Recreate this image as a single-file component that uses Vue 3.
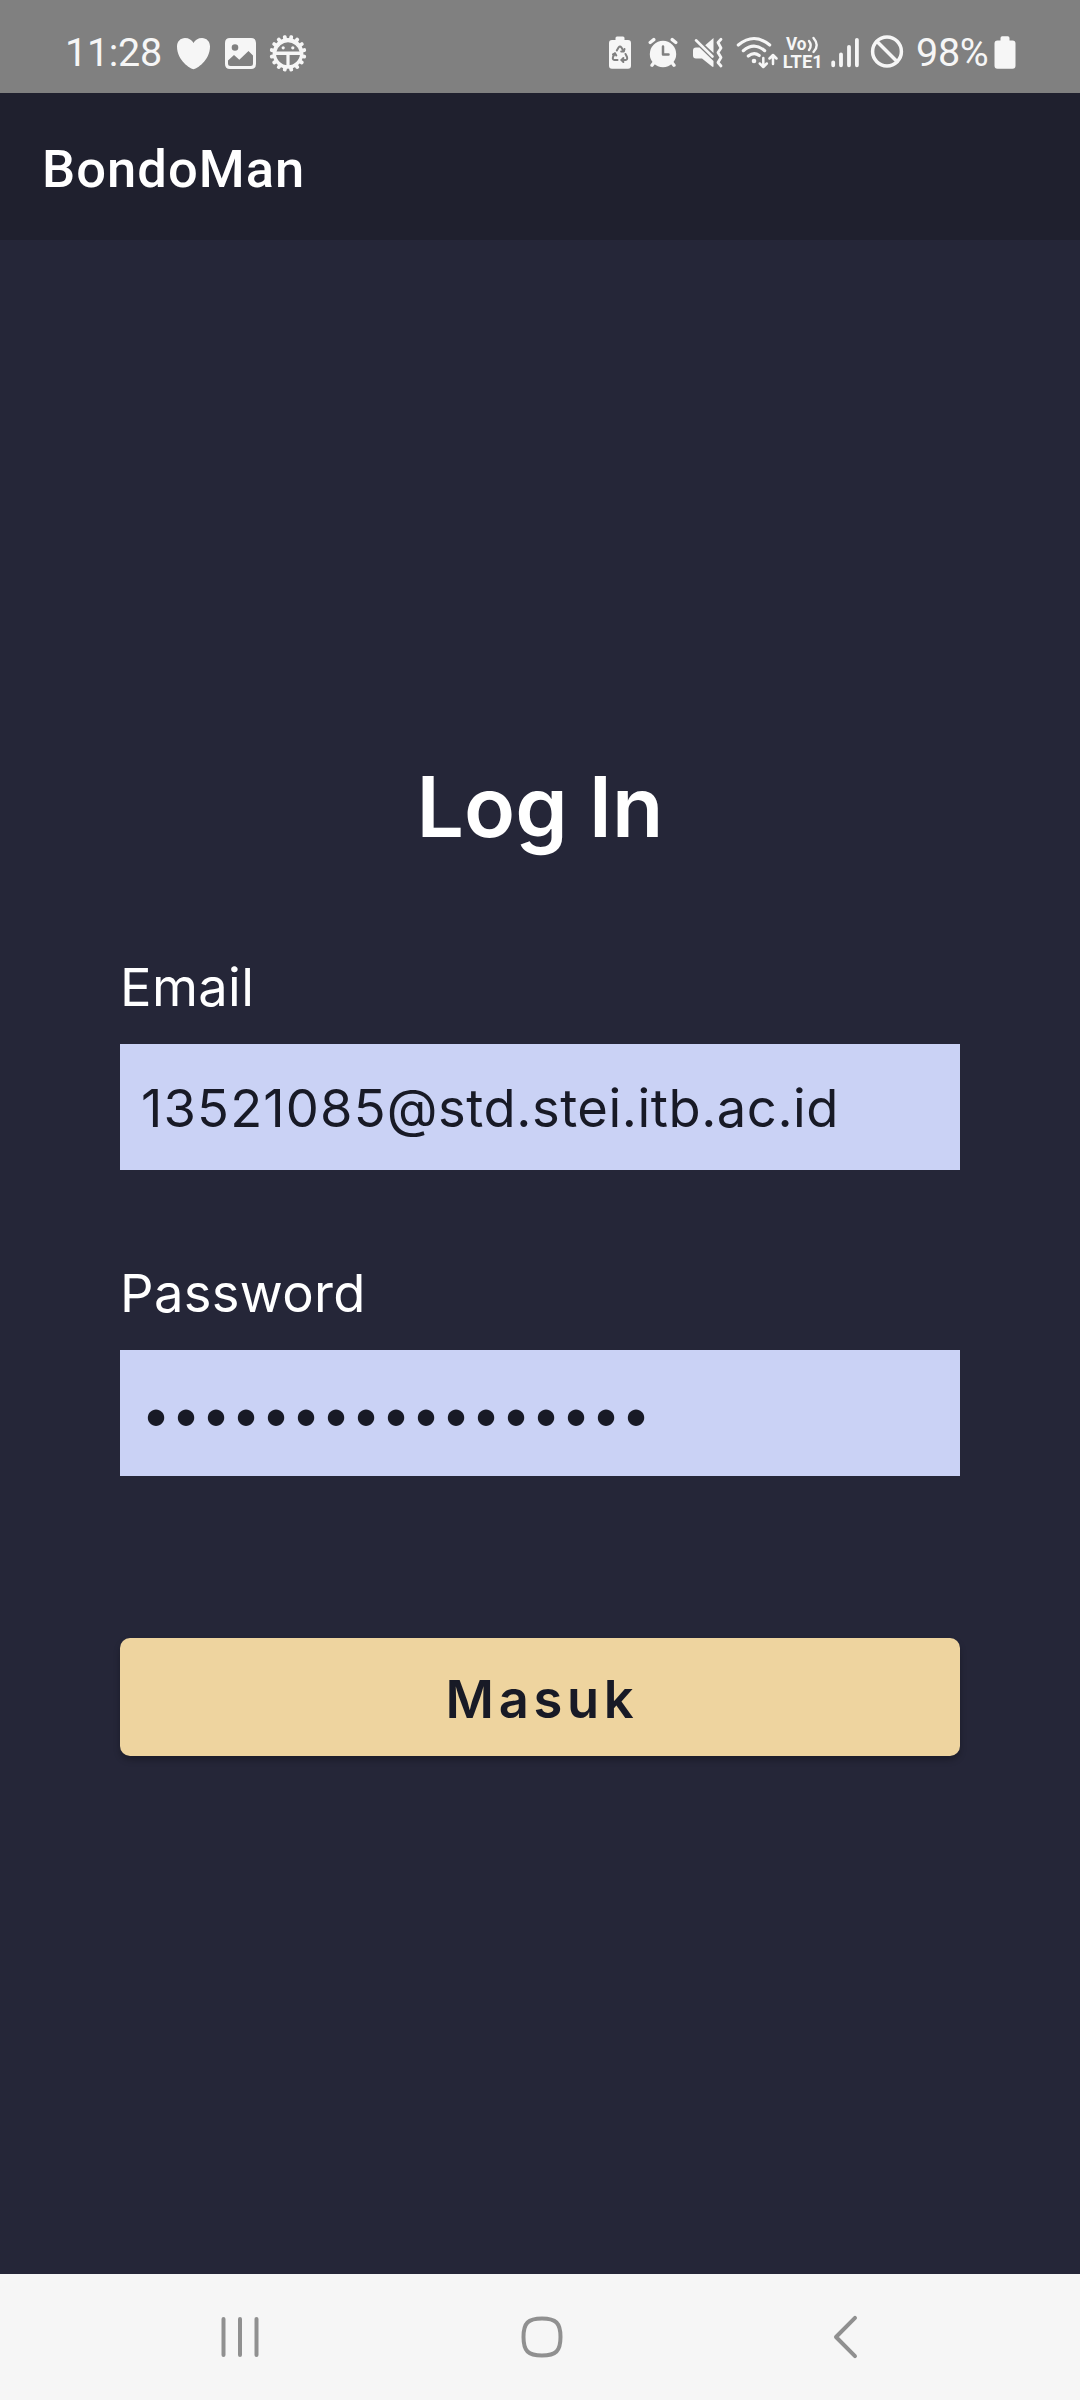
<script setup>
import { computed, ref } from 'vue'

const email = ref('13521085@std.stei.itb.ac.id')
const userName = computed(() => email.value.split('@')[0])
const domain = computed(() => '@' + email.value.split('@')[1])
const passwordLength = 17

const gearTeeth = Array.from({ length: 16 }, (_, i) => i * 22.5 + 11.25)
</script>

<template>
  <div class="screen">
    <header class="status">
      <div class="group">
        <span class="clock">11:28</span>
        <svg class="heart" width="36" height="39" viewBox="176 33 36 39">
          <path d="M193.5 69.2C190.500 69 177 60.500 177 46.500C177 41.500 180.500 38 185 38C189 38 192 40 193.500 43C195 40 198 38 202 38C206.500 38 210 41.500 210 46.500C210 60.500 196.500 69 193.500 69.200Z" />
        </svg>
        <svg class="photo" width="32" height="39" viewBox="225 33 32 39">
          <path fill-rule="evenodd" d="M230 38H251Q256 38 256 43V64Q256 69 251 69H230Q225 69 225 64V43Q225 38 230 38ZM228 60.500V63.500Q228 66 230.500 66H250.500Q253 66 253 63.500V55.500L248.500 51L239.300 59.800L234 55ZM235 44.200A3.300 3.300 0 1 0 235 50.800A3.300 3.300 0 1 0 235 44.200Z" />
        </svg>
        <svg class="gear" width="38" height="39" viewBox="268.500 33 38 39">
          <g transform="translate(287.500 53.300)">
            <rect v-for="a in gearTeeth" :key="a" x="-1.900" y="-18.400" width="3.800" height="6" rx="1.600" :transform="`rotate(${a})`" />
            <circle r="13.700" class="line" stroke-width="3.400" />
            <path d="M-12.500 0A12.500 12.500 0 0 1 12.500 0ZM-13 -1.600H13V1.600H-13ZM-1.600 0H1.600V13H-1.600Z" />
            <path class="hole" d="M-11.500 -1.800A11.800 11.800 0 0 1 11.500 -1.800Z" />
            <circle cx="-4.800" cy="-5.500" r="1.600" />
            <circle cx="4.800" cy="-5.500" r="1.600" />
          </g>
        </svg>
      </div>

      <div class="group">
        <svg class="saver" width="24" height="39" viewBox="608 33 24 39">
          <path d="M615.500 40V38Q615.500 36.500 617 36.500H623Q624.500 36.500 624.500 38V40H628Q631 40 631 43V65.500Q631 68.700 628 68.700H612Q609 68.700 609 65.500V43Q609 40 612 40Z" />
          <path class="cut" d="M616.800 50.500L618.700 47.300Q620 45.600 621.300 47.300L623.500 51M625.500 54L627 57Q627.800 59.800 625.500 60H621.500M617.500 60H614.500Q612.200 59.800 613 57L614.800 53.500" />
          <path class="cut" d="M613 54.500L615 53.400L616.300 55.500M623.400 58L621.500 60L623.400 62M621.200 51.500L623.800 51.500L624.500 49" stroke-width="1.300" />
        </svg>
        <svg class="alarm" width="30" height="39" viewBox="647.500 33 30 39">
          <circle cx="662.500" cy="54" r="13.200" />
          <path class="line" stroke-width="3.300" d="M649.700 42.500L653.300 39.600M675.300 42.500L671.700 39.600M654 62L651.500 65.300M671 62L673.500 65.300" />
          <path class="hole-line" stroke-width="2.500" d="M662.500 46.500V54.500H668" />
        </svg>
        <svg class="mute" width="31" height="39" viewBox="692 33 31 39">
          <path d="M693 50.500Q693 47.500 696 47.500H699.500L713.500 61V66Q713.500 67.500 712 66.500L702 58.500H696Q693 58.500 693 55.500ZM705.200 45.200L713.500 38V53Z" />
          <path class="line" stroke-width="2.600" d="M696 40.300L712.500 56.500" />
          <path class="line" stroke-width="2.800" d="M721 39.300L718 42.500L721 48L718 52.500L721 57.500L718 62.500L721 66" />
        </svg>
        <svg class="wifi" width="43" height="39" viewBox="736 33 43 39">
          <path class="line" stroke-width="3.100" d="M738.300 45Q754 32 769.700 45M743.300 50.700Q754 41.500 764.700 50.700M748.300 56Q754 51.500 759.200 55.500" />
          <circle cx="754" cy="61" r="2.300" />
          <path class="line" stroke-width="2.500" d="M763.300 58V66.500M759.800 63.500L763.300 67L766.800 63.500M773 64V55.500M769.500 58.500L773 55L776.500 58.500" />
        </svg>
        <svg class="volte" width="42" height="39" viewBox="782 33 42 39">
          <text x="786" y="50.300" font-size="17.500" textLength="20.500" lengthAdjust="spacingAndGlyphs">Vo</text>
          <path class="line" stroke-width="2.400" d="M809 41Q812.500 45.500 809 50M813.500 38Q820 45.500 813.500 52" />
          <text x="782.700" y="67.800" font-size="18" textLength="40" lengthAdjust="spacingAndGlyphs">LTE1</text>
        </svg>
        <svg class="signal" width="30" height="39" viewBox="830 33 30 39">
          <path class="line" stroke-width="3.800" d="M833.200 62.300V65.300M841 54.300V65.300M849 46.800V65.300M856.900 39.800V65.300" />
        </svg>
        <svg class="blocked" width="34" height="39" viewBox="870 33 34 39">
          <circle class="line" cx="887" cy="51.500" r="14.400" stroke-width="3.500" />
          <path class="line" stroke-width="3.500" d="M877 41.500L897 61.500" />
        </svg>
        <span class="percent">98%</span>
        <svg class="battery" width="22" height="39" viewBox="993.500 33 22 39">
          <path d="M1000 40.500V38Q1000 36.300 1001.700 36.300H1007.300Q1009 36.300 1009 38V40.500H1012Q1015 40.500 1015 43.500V65.500Q1015 68.700 1012 68.700H997Q994 68.700 994 65.500V43.500Q994 40.500 997 40.500Z" />
        </svg>
      </div>
    </header>

    <div class="toolbar"><span class="app-name">BondoMan</span></div>

    <main class="content">
      <h1>Log In</h1>
      <label>Email</label>
      <div class="field"><span class="value"><span class="user">{{ userName }}</span>{{ domain }}</span></div>
      <label class="second">Password</label>
      <div class="field dots"><span v-for="n in passwordLength" :key="n">•</span></div>
      <button type="button"><span>Masuk</span></button>
    </main>

    <nav class="navbar">
      <svg width="42" height="48" viewBox="219 2313 42 48">
        <path d="M223.500 2319V2355M240 2319V2355M256.500 2319V2355" />
      </svg>
      <svg class="home" width="44" height="48" viewBox="520 2313 44 48">
        <path d="M542 2318.500C556 2318.500 560.500 2323 560.500 2337S556 2355.500 542 2355.500S523.500 2351 523.500 2337S528 2318.500 542 2318.500Z" />
      </svg>
      <svg class="back" width="28" height="48" viewBox="831 2313 28 48">
        <path d="M855 2317.800L836 2337L855 2356.200" />
      </svg>
    </nav>
  </div>
</template>

<style>
body {
  margin: 0;
}
</style>

<style scoped>
.screen {
  width: 1080px;
  height: 2400px;
  display: flex;
  flex-direction: column;
  overflow: hidden;
  background: #252638;
  color: #fff;
  font-family: Inter, sans-serif;
}
svg {
  display: block;
  flex: none;
}
.status {
  height: 93px;
  box-sizing: border-box;
  padding: 12px 64.500px 0 65px;
  display: flex;
  justify-content: space-between;
  background: #808080;
  color: #f6f6f6;
  font: 39.500px/81px Roboto, sans-serif;
}
.status svg {
  fill: #f6f6f6;
}
.status .line {
  fill: none;
  stroke: #f6f6f6;
  stroke-linecap: round;
  stroke-linejoin: round;
}
.status .hole {
  fill: #808080;
}
.status .cut,
.status .hole-line {
  fill: none;
  stroke: #808080;
  stroke-linecap: round;
  stroke-linejoin: round;
}
.status .cut {
  stroke-width: 2;
}
.status text {
  font-family: Roboto, sans-serif;
  font-weight: 700;
}
.group {
  display: flex;
  align-items: center;
}
.clock {
  width: 111px;
  letter-spacing: -0.3px;
  white-space: nowrap;
}
.photo { margin-left: 13px; }
.gear { margin-left: 11.500px; }
.alarm { margin-left: 15.500px; }
.mute { margin-left: 14.500px; }
.wifi { margin-left: 13px; }
.volte { margin-left: 3px; }
.signal { margin-left: 6px; }
.blocked { margin-left: 10px; }
.percent {
  width: 77.500px;
  margin-left: 12px;
  letter-spacing: -0.3px;
  white-space: nowrap;
}
.toolbar {
  height: 147px;
  box-sizing: border-box;
  padding: 4px 42px 0;
  display: flex;
  align-items: center;
  background: #1f202e;
}
.app-name {
  font: 500 52.500px/62px Roboto, sans-serif;
  letter-spacing: 1.05px;
}
.content {
  flex: 1;
  display: flex;
  flex-direction: column;
  padding: 516px 120px 0;
}
h1 {
  margin: 0 0 97px;
  font-size: 84px;
  line-height: 102px;
  font-weight: 600;
  text-align: center;
}
label {
  height: 64px;
  margin-bottom: 25px;
  font-size: 52.500px;
  line-height: 64px;
  letter-spacing: 0.35px;
}
label.second {
  margin-top: 91px;
}
.field {
  height: 126px;
  box-sizing: border-box;
  padding: 2px 21px 0;
  display: flex;
  align-items: center;
  background: #cad2f5;
  color: #181a26;
  font-size: 52.500px;
}
.value {
  letter-spacing: 0.55px;
}
.user {
  letter-spacing: 1.15px;
}
.dots span {
  width: 30px;
  text-align: center;
}
button {
  height: 118px;
  margin-top: 162px;
  padding: 4px 0 0 4px;
  border: 0;
  border-radius: 10px;
  background: #eed49f;
  color: #181a26;
  font: 600 52.500px/64px Inter, sans-serif;
  letter-spacing: 4.700px;
  box-shadow: 0 4px 6px rgba(0, 0, 0, 0.25);
}
.navbar {
  height: 126px;
  box-sizing: border-box;
  padding-left: 219px;
  display: flex;
  align-items: center;
  background: #f6f6f6;
}
.home { margin-left: 259px; }
.back { margin-left: 267px; }
.navbar path {
  fill: none;
  stroke: #909090;
  stroke-width: 4;
  stroke-linecap: round;
  stroke-linejoin: round;
}
</style>
